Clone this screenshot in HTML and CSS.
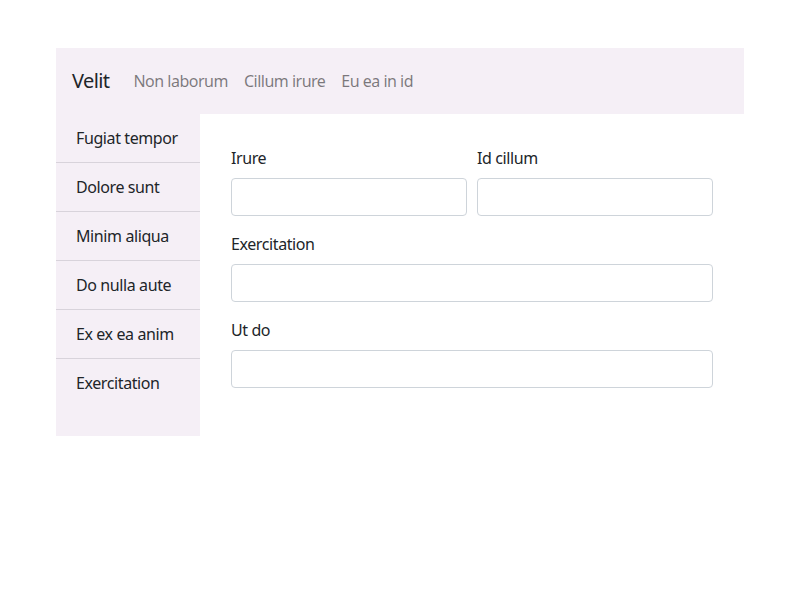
FILE: index.html
```html
<!DOCTYPE html>
<html>
<head>
<meta charset="utf-8">
<link rel="stylesheet" href="styles.css">
</head>
<body>
<div class="app">
  <nav class="navbar">
    <span class="brand">Velit</span>
    <a class="nav-link">Non laborum</a>
    <a class="nav-link">Cillum irure</a>
    <a class="nav-link">Eu ea in id</a>
  </nav>
  <div class="body">
    <aside class="sidebar">
      <div class="side-item">Fugiat tempor</div>
      <div class="side-item">Dolore sunt</div>
      <div class="side-item">Minim aliqua</div>
      <div class="side-item">Do nulla aute</div>
      <div class="side-item">Ex ex ea anim</div>
      <div class="side-item last">Exercitation</div>
    </aside>
    <main class="main">
      <div class="row">
        <div class="group">
          <label class="label">Irure</label>
          <input class="input" type="text">
        </div>
        <div class="group">
          <label class="label">Id cillum</label>
          <input class="input" type="text">
        </div>
      </div>
      <div class="group">
        <label class="label">Exercitation</label>
        <input class="input" type="text">
      </div>
      <div class="group">
        <label class="label">Ut do</label>
        <input class="input" type="text">
      </div>
    </main>
  </div>
</div>
</body>
</html>
```
FILE: styles.css
```css
* { box-sizing: border-box; }
body {
  margin: 0;
  background: #fff;
  font-family: "Noto Sans", "Open Sans", sans-serif;
  font-size: 16px;
  line-height: 24px;
  letter-spacing: -0.4px;
  color: #212529;
}
.app {
  margin: 48px 56px 0;
  width: 688px;
}
.navbar {
  display: flex;
  align-items: center;
  background: #f5eff6;
  height: 66px;
  padding: 0 16px;
}
.brand {
  font-size: 20px;
  line-height: 30px;
  letter-spacing: -0.6px;
  color: #212529;
  margin-right: 16px;
}
.nav-link {
  padding: 0 8px;
  letter-spacing: -0.5px;
  color: rgba(0,0,0,0.5);
}
.body {
  display: flex;
}
.sidebar {
  width: 144px;
  background: #f5eff6;
}
.side-item {
  padding: 12px 20px;
  border-bottom: 1px solid #d8d3db;
  white-space: nowrap;
}
.side-item.last { border-bottom: none; }
.main {
  flex: 1;
  padding: 32px 31px 32px 31px;
}
.row {
  display: flex;
  gap: 10px;
}
.row .group { flex: 1; }
.group {
  margin-bottom: 16px;
}
.label {
  display: block;
  margin-bottom: 8px;
}
.input {
  display: block;
  width: 100%;
  height: 38px;
  border: 1px solid #ced4da;
  border-radius: 4px;
  background: #fff;
  font: inherit;
  padding: 6px 12px;
}
```
